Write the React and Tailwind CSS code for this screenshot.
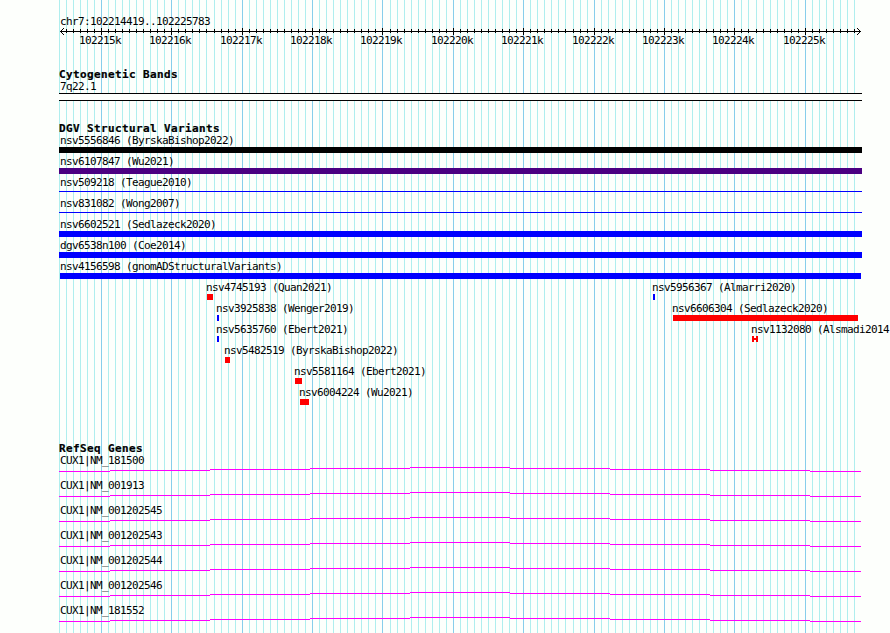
const START = 102214419
const PX_PER_BP = 800 / 11365
const toX = (bp) => Math.round(60 + (bp - START) * PX_PER_BP)

const gridLines = Array.from({ length: 114 }, (_, i) => {
  const bp = 102214400 + i * 100
  return { bp, x: toX(bp), major: bp % 1000 === 0 }
})

// each lane holds the variants that share a row; `label` is the text's left edge
const lanes = [
  [{ name: "nsv5556846 (ByrskaBishop2022)", label: 60, x: 59, w: 803, color: "bg-black" }],
  [{ name: "nsv6107847 (Wu2021)", label: 60, x: 59, w: 803, color: "bg-[#4b0082]" }],
  [{ name: "nsv509218 (Teague2010)", label: 60, x: 59, w: 803, color: "bg-[#0000ff]", shape: "line" }],
  [{ name: "nsv831082 (Wong2007)", label: 60, x: 59, w: 803, color: "bg-[#0000ff]", shape: "line" }],
  [{ name: "nsv6602521 (Sedlazeck2020)", label: 60, x: 59, w: 803, color: "bg-[#0000ff]" }],
  [{ name: "dgv6538n100 (Coe2014)", label: 60, x: 59, w: 803, color: "bg-[#0000ff]" }],
  [{ name: "nsv4156598 (gnomADStructuralVariants)", label: 60, x: 60, w: 801, color: "bg-[#0000ff]" }],
  [
    { name: "nsv4745193 (Quan2021)", label: 206, x: 207, w: 6, color: "bg-[#ff0000]" },
    { name: "nsv5956367 (Almarri2020)", label: 652, x: 653, w: 2, color: "bg-[#0000ff]" },
  ],
  [
    { name: "nsv3925838 (Wenger2019)", label: 216, x: 217, w: 2, color: "bg-[#0000ff]" },
    { name: "nsv6606304 (Sedlazeck2020)", label: 672, x: 673, w: 185, color: "bg-[#ff0000]" },
  ],
  [
    { name: "nsv5635760 (Ebert2021)", label: 216, x: 217, w: 2, color: "bg-[#0000ff]" },
    { name: "nsv1132080 (Alsmadi2014", label: 751, x: 752, w: 6, shape: "gap" },
  ],
  [{ name: "nsv5482519 (ByrskaBishop2022)", label: 224, x: 225, w: 5, color: "bg-[#ff0000]" }],
  [{ name: "nsv5581164 (Ebert2021)", label: 294, x: 295, w: 7, color: "bg-[#ff0000]" }],
  [{ name: "nsv6004224 (Wu2021)", label: 299, x: 300, w: 9, color: "bg-[#ff0000]" }],
]

const genes = [
  "CUX1|NM_181500",
  "CUX1|NM_001913",
  "CUX1|NM_001202545",
  "CUX1|NM_001202543",
  "CUX1|NM_001202544",
  "CUX1|NM_001202546",
  "CUX1|NM_181552",
]

function Label({ children }) {
  return <div className="h-3 text-[11px] leading-3 tracking-[-0.622px] whitespace-pre">{children}</div>
}

function Heading({ children }) {
  return (
    <h2 className="ml-[59px] h-3 text-[11px] leading-3 font-bold tracking-[0.378px] whitespace-pre [-webkit-text-stroke:0.2px_black]">
      {children}
    </h2>
  )
}

function Grid() {
  return (
    <svg width="890" height="633" className="absolute inset-0 -z-10" shapeRendering="crispEdges">
      {gridLines.map((l) => (
        <rect key={l.bp} x={l.x} y="0" width="1" height="633" fill={l.major ? "#87ceeb" : "#afeeee"} />
      ))}
    </svg>
  )
}

function Axis() {
  return (
    <svg width="890" height="7" className="block" shapeRendering="crispEdges">
      <rect x="60" y="3" width="801" height="1" />
      {gridLines.slice(1).map((l) => (
        <rect key={l.bp} x={l.x} y={l.major ? 0 : 1} width="1" height={l.major ? 7 : 4} />
      ))}
      {[1, 2, 3].map((d) => (
        <g key={d}>
          <rect x={60 + d} y={3 - d} width="1" height="1" />
          <rect x={60 + d} y={3 + d} width="1" height="1" />
          <rect x={860 - d} y={3 - d} width="1" height="1" />
          <rect x={860 - d} y={3 + d} width="1" height="1" />
        </g>
      ))}
    </svg>
  )
}

function Glyph({ v }) {
  const style = { width: v.w, marginLeft: v.x }
  if (v.shape === "line") {
    return (
      <div className="h-1.5 pt-0.5" style={style}>
        <div className={`h-px ${v.color}`} />
      </div>
    )
  }
  if (v.shape === "gap") {
    return (
      <div className="flex h-1.5 items-center" style={style}>
        <div className="h-full w-0.5 bg-[#ff0000]" />
        <div className="h-0.5 flex-1 bg-[#ff0000]" />
        <div className="h-full w-0.5 bg-[#ff0000]" />
      </div>
    )
  }
  return <div className={`h-1.5 ${v.color}`} style={style} />
}

export default function App() {
  return (
    <main className="relative isolate flex h-[633px] w-[890px] flex-col overflow-hidden bg-[#fdfffc] font-['DejaVu_Sans_Mono',monospace] text-black">
      <Grid />

      {/* Scale */}
      <header className="h-[53px] pt-4">
        <div className="ml-[60px]">
          <Label>chr7:102214419..102225783</Label>
        </div>
        <Axis />
        <div className="grid">
          {gridLines
            .filter((l) => l.major)
            .map((l) => (
              <div key={l.bp} className="col-start-1 row-start-1" style={{ marginLeft: l.x - 22 }}>
                <Label>{l.bp / 1000}k</Label>
              </div>
            ))}
        </div>
      </header>

      {/* Cytobands */}
      <section className="h-[70px] pt-4">
        <Heading>Cytogenetic Bands</Heading>
        <div className="ml-[60px]">
          <Label>7q22.1</Label>
        </div>
        <div className="ml-[59px] h-2 w-[803px] border-y border-black bg-[#fdfffc]" />
      </section>

      {/* Structural variants */}
      <section className="h-[320px]">
        <Heading>DGV Structural Variants</Heading>
        {lanes.map((lane, i) => (
          <div key={i} className="grid h-[21px]">
            {lane.map((v) => (
              <div key={v.name} className="col-start-1 row-start-1">
                <div style={{ marginLeft: v.label }}>
                  <Label>{v.name}</Label>
                </div>
                <Glyph v={v} />
              </div>
            ))}
          </div>
        ))}
      </section>

      {/* Genes */}
      <section>
        <Heading>RefSeq Genes</Heading>
        {genes.map((gene) => (
          <div key={gene} className="h-[25px]">
            <div className="ml-[60px]">
              <Label>{gene}</Label>
            </div>
            <svg width="890" height="5" className="block" shapeRendering="crispEdges" fill="#ff00ff">
              <rect x="59" y="4" width="51" height="1" />
              <rect x="110" y="3" width="100" height="1" />
              <rect x="210" y="2" width="100" height="1" />
              <rect x="310" y="1" width="100" height="1" />
              <rect x="410" y="0" width="100" height="1" />
              <rect x="510" y="1" width="100" height="1" />
              <rect x="610" y="2" width="100" height="1" />
              <rect x="710" y="3" width="100" height="1" />
              <rect x="810" y="4" width="51" height="1" />
            </svg>
          </div>
        ))}
      </section>
    </main>
  )
}
